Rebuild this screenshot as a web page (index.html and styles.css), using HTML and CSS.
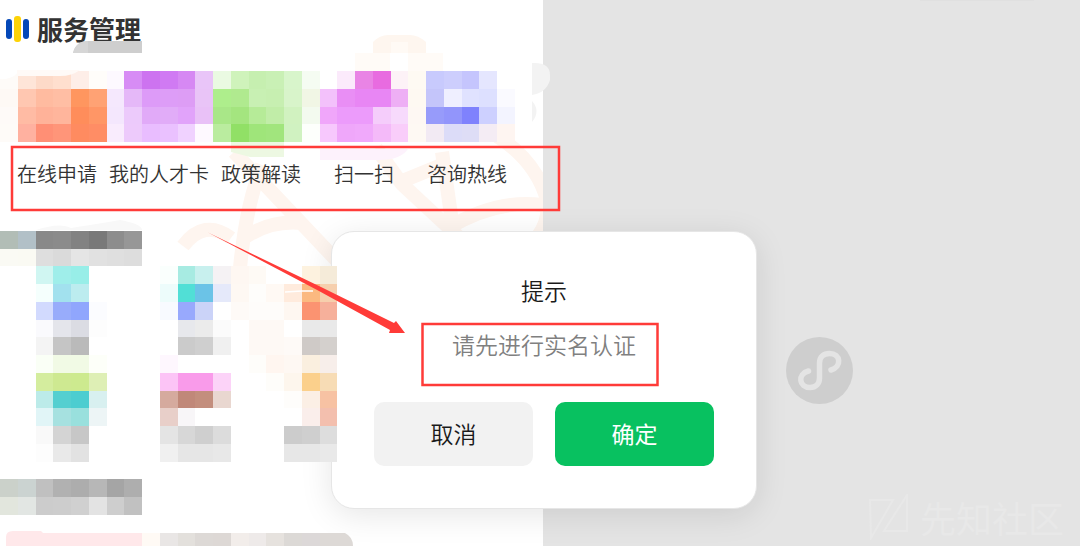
FILE: index.html
```html
<!DOCTYPE html>
<html lang="zh-CN">
<head>
<meta charset="utf-8">
<title>服务管理</title>
<link rel="stylesheet" href="styles.css">
</head>
<body>
<div class="screen">
  <main class="panel">
    <svg class="panel-pattern" viewBox="0 0 543 546" aria-hidden="true">
      <g fill="none" stroke="#fef5ef" stroke-width="14">
        <path d="M183 246Q204 218 231 238"/>
        <path d="M262 165Q246 205 240 268"/>
        <path d="M234 152L338 262"/>
        <path d="M244 238Q270 220 302 223"/>
        <path d="M376 148L402 184L462 240"/>
        <path d="M400 182L444 164"/>
        <path d="M442 152L452 222"/>
        <path d="M448 228Q500 197 548 206"/>
        <path d="M494 134Q536 160 547 200Q550 220 538 236"/>
      </g>
    </svg>
    <header class="title-bar">
      <svg class="title-mark" viewBox="0 0 23 26" aria-hidden="true">
        <rect x="0" y="3" width="6" height="20" rx="3" fill="#0448b8"/>
        <rect x="8" y="0" width="7" height="26" rx="3" fill="#fdd307"/>
        <rect x="17" y="3" width="6" height="20" rx="3" fill="#0448b8"/>
      </svg>
      <h1 class="title">服务管理</h1>
    </header>
    <nav class="services">
      <a class="service" href="#">在线申请</a>
      <a class="service" href="#">我的人才卡</a>
      <a class="service" href="#">政策解读</a>
      <a class="service service-wide" href="#">扫一扫</a>
      <a class="service" href="#">咨询热线</a>
    </nav>
  </main>
  <aside class="side">
    <svg class="mini-logo" viewBox="0 0 67 67" aria-hidden="true">
      <circle cx="33.5" cy="33.5" r="33.5" fill="#cecece"/>
      <path d="M22.500 34C11 37 13 50.500 24 50.500C30 50.500 33.500 46.500 33.500 41V26C33.500 20 37.500 16.500 43.500 16.500C55 16.500 56 30 45 33" fill="none" stroke="#e4e4e4" stroke-width="5.500" stroke-linecap="round"/>
    </svg>
    <div class="brand">
      <svg class="brand-logo" viewBox="0 0 40 46" aria-hidden="true">
        <path d="M1 6H24L2 44ZM38 1V37H15Z" fill="none" stroke="#e8e8e8" stroke-width="2"/>
      </svg>
      <span class="brand-name">先知社区</span>
    </div>
  </aside>
  <section class="dialog" role="dialog" aria-labelledby="dialog-title">
    <h2 class="dialog-title" id="dialog-title">提示</h2>
    <p class="dialog-text">请先进行实名认证</p>
    <div class="dialog-actions">
      <button class="button" type="button">取消</button>
      <button class="button button-primary" type="button">确定</button>
    </div>
  </section>
  <svg class="overlay" width="1080" height="546" viewBox="0 0 1080 546" aria-hidden="true">
    <path d="M73 53Q76 41 88 41H142V53Z" fill="#cecece"/>
    <path d="M88 41V53H73Q76 41 88 41Z" fill="#d6d6d6"/>
    <path d="M373 53V42Q380 35 388 35H410Q418 35 426 42V53Z" fill="#fef6ef"/>
    <path d="M391 42H408V53H391Z" fill="#fffaf5"/>
    <path d="M355 53H390V71H355ZM408 53H443V71H408Z" fill="#fffbf7"/>
    <path d="M532 63Q550 62 550 75V80Q546 93 532 95Z" fill="#f3f3f3"/>
    <path d="M532 101Q541 111 532 122Z" fill="#f3f3f3"/>
    <path d="M0 79Q10 80 18 73V142H0Z" fill="#fefbf8"/>
    <path d="M231 142H284V157H250L231 152Z" fill="#edf8e2"/>
    <path d="M320 149H408Q400 160 380 160H320Z" fill="#fdf2fc"/>
    <path d="M36 230Q60 222 71 228Q110 222 120 220Q142 224 142 230Z" fill="#f8f8f8"/>
    <g id="mosaic" shape-rendering="crispEdges"></g>
    <path d="M17 70H80Q72 76 60 76H17Z" fill="#fffaf7"/>
    <path d="M6 546V537Q6 531 13 531H41L43 533H142V546Z" fill="#ffe8ea"/>
    <path d="M337 533H345Q353 537 353 546H337Z" fill="#ddd9d6"/>
    <path d="M285 292L302 291H313" fill="none" stroke="#fff" stroke-width="1.500"/>
    <path d="M920 0H1034" stroke="#dcdcdc"/>
    <g fill="none" stroke="#ff3b38" stroke-width="2.500">
      <rect x="12" y="147" width="547" height="63"/>
      <rect x="422.500" y="324" width="235" height="61"/>
    </g>
    <path d="M208 232.500L321 287L394 323L396 321L405 333H389L390 330L319 291Z" fill="#ff3b38"/>
  </svg>
</div>
<script src="mosaic.js"></script>
</body>
</html>
```
FILE: styles.css
```css
* {
  box-sizing: border-box;
}

body {
  margin: 0;
  color: #333;
  background: #e4e4e4;
  font-family: "Noto Sans CJK SC", sans-serif;
  font-weight: 350;
}

.screen {
  position: relative;
  display: grid;
  grid-template-columns: 543fr 537fr;
  min-height: 100vh;
  overflow: hidden;
}

.panel {
  position: relative;
  background: #fff;
}

.panel-pattern {
  position: absolute;
  top: 0;
  left: 0;
  width: 100%;
}

.title-bar {
  position: relative;
  display: flex;
  align-items: center;
  gap: 8px;
  padding: 9px 6px;
}

.title-mark {
  width: 23px;
  height: 26px;
}

.title {
  margin: 0;
  font-size: 26px;
  line-height: 40px;
  font-weight: 700;
}

.services {
  position: relative;
  display: flex;
  gap: 12px;
  margin: 88px 0 0;
  padding: 12px 17px;
}

.service {
  color: #333;
  font-size: 20px;
  line-height: 32px;
  text-align: center;
  text-decoration: none;
  white-space: nowrap;
}

.service-wide {
  width: 102px;
}

.side {
  display: flex;
  flex-direction: column;
  align-items: center;
  padding: 337px 16px 6px 32px;
}

.mini-logo {
  width: 67px;
  height: 67px;
}

.brand {
  display: flex;
  align-items: center;
  align-self: flex-end;
  gap: 11px;
  margin-top: auto;
}

.brand-logo {
  width: 40px;
  height: 46px;
}

.brand-name {
  color: #e8e8e8;
  font-size: 36px;
  line-height: 44px;
  font-weight: 400;
}

.dialog {
  position: absolute;
  top: 231px;
  left: 331px;
  width: 426px;
  padding: 42px;
  border: 1px solid #e6e6e6;
  border-radius: 23px;
  background: #fff;
  box-shadow: 0 6px 32px rgba(0, 0, 0, 0.1);
  text-align: center;
}

.dialog-title {
  margin: 0;
  color: #1a1a1a;
  font-size: 23px;
  line-height: 32px;
  font-weight: 350;
}

.dialog-text {
  margin: 22px 0 42px;
  color: #808080;
  font-size: 23px;
  line-height: 32px;
}

.dialog-actions {
  display: grid;
  grid-template-columns: 1fr 1fr;
  gap: 22px;
}

.button {
  height: 64px;
  padding: 0 0 2px;
  border: 0;
  border-radius: 10px;
  color: #1a1a1a;
  background: #f2f2f2;
  font: inherit;
  font-size: 23px;
  line-height: 32px;
}

.button-primary {
  color: #fff;
  background: #08c160;
  font-weight: 400;
}

.overlay {
  position: absolute;
  top: 0;
  left: 0;
  pointer-events: none;
}
```
FILE: mosaic.js
```js
// Each run is [row, first column, colours of consecutive cells].
const runs = [
  [4, 1, "fee5d8 fddac8 ffdfce feeee8 fffdfa fdf9ff d78cf5 cd73f0 d07af3 d688f3 e9c5f8 eafae2 cff3bb c6efb0 c9f0b5 d8f5cb f5fcf2 ffffff fbeafb e984e5 e86be0 fdf2f7 fefaf3 c8cafd cdcefd c5c5fd e5e6fe"],
  [5, 0, "fef9f5 ffc7b1 ffbba0 ffbea4 ff965f ffa274 f5e8fd e5b8f8 dd9bf8 dd9df7 dd9df5 e9c4f7 aeee8c b0ea8f c8f0b3 c7efb1 d8f4ca f1f6e5 f3c1fb e98ef5 e886f4 e886f4 eeaff5 fef9f2 c4c5fa efefff e0e2ff dde0ff fafaff"],
  [6, 0, "fefaf8 ffbba4 ffb299 ffb59c ff8d5b ff9666 f4e7fd eccafb e1aaf8 e1acf8 e1a3fa e9c1f7 a9e788 a4e57f b6eb98 c1eda8 d1f2c0 f3faef f0a6fa ec9bfb ec9bfb f5cdfb f7dafc fef8f3 979bfa 9295fb 7f82fd cdd0ff f3f4ff"],
  [7, 0, "fefbf8 ffb1a0 ff8f75 ff9579 ff8b60 ff8d65 f9ecfd edcafb e9bdff eac1ff f0d2ff fef9ff baec9f 91e066 9fe57a a1e57d d0f2c1 fdfffc f7c8fd efa7fa f0a9fb f4baf9 f9cdfa fef9f3 f2eaf3 dcdcf8 deddf6 f4ecf4 fef5f1"],
  [13, 0, "b2bdb6 b2c0c7 898989 8b8b8b 828282 797979 8d8d8d 979797"],
  [14, 0, "fafaf4 fafaf3 dedede dadada e5e5e5 e1e1e1 dfdfdf dddddd"],
  [15, 2, "d0f6f2 9feeea 98eee8"],
  [15, 9, "fafffd a7ebe2 c8f0ee f5f2f4 fef7f2 fefaf5"],
  [15, 17, "fdf2df f5ebd9"],
  [16, 2, "f5fffd a2e1ee bcecef"],
  [16, 9, "edfcfb 51dfd6 6bc3e7 e5e9fa fef8f3 fefdfb fff9f4 ffebdd fbb980 f6cfad"],
  [17, 2, "d2dafe 98acfb 90a6fd fbfcff"],
  [17, 9, "f8faff 98a9fd cbd3f8 ffffff fefaf7 fefcfa fefcfa fef7f1 fb9371 f6b09b"],
  [18, 2, "fafafd e4e5eb dbdce3 fdfdfd"],
  [18, 10, "e7e8ec ebebeb fbfbfb ffffff fef9f5 fef9f5 ffffff e9e9e9 e9e9e9"],
  [19, 2, "f4f4f4 c5c5c5 bababa"],
  [19, 10, "cbcbcb cfcfcf f0f0f0 ffffff fef9f5 fef9f5 fefaf7 cfcac7 d4d0cd"],
  [20, 2, "fafff6 f1fae5 f1fae5 fdfff9"],
  [20, 9, "fef7fe"],
  [20, 14, "fefdfa fff6f0 fef8f3 faefdf f7eeea"],
  [21, 2, "d4ed9e cee991 cdea8f deefb5"],
  [21, 9, "fcc4f6 f99bea f99bea fcd3f8"],
  [21, 15, "fefdfa fdf6ed fbd08c f7dcb5"],
  [22, 2, "bcebe9 54cfd0 4ccdd0 d8f0f0"],
  [22, 9, "d5aa9e c08879 c38e7d e9d7d0"],
  [22, 16, "fefdfb fbefe5 f7c2a3"],
  [23, 2, "e1f5f7 a6e1e0 99e0dd edf5f6"],
  [23, 9, "e8cfc9 f8f6f8"],
  [23, 17, "faeeeb f3bfae"],
  [24, 2, "f9f9f9 d4d4d4 c7c7c7"],
  [24, 9, "e4e4e4 d7d7d7 cfcfcf dcdcdc"],
  [24, 16, "cccccc cfcfcf dddddd"],
  [25, 2, "fdfdfd e9e9e9 e2e2e2"],
  [25, 9, "f0f0f0 e6e6e6 e6e6e6 e8e8e8"],
  [25, 16, "e7e7e7 e7e7e7 e9e9e9"],
  [27, 0, "cbd1ca cbd3d1 c0c0c0 b1b1b1 adadad b7b7b7 a5a5a5 aeaeae"],
  [28, 0, "e2e6dd e2e6e3 cccccc cdcdcd d0d0d0 e3e3e3 cecece c1c1c1"],
  [30, 8, "fffaf5 e9e6e5 e3e0dc ddd9d6 ddd8d5 f2edea eeeae9 e6e2de dcd9d6 dcd8d8 ddd9d6"]
];

const CELL = 17.75;
const mosaic = document.getElementById("mosaic");
const edge = (index) => Math.round(index * CELL);

for (const [row, start, colours] of runs) {
  colours.split(" ").forEach((colour, i) => {
    const rect = document.createElementNS("http://www.w3.org/2000/svg", "rect");
    const x = edge(start + i);
    const y = edge(row);
    rect.setAttribute("x", x);
    rect.setAttribute("y", y);
    rect.setAttribute("width", edge(start + i + 1) - x);
    rect.setAttribute("height", edge(row + 1) - y);
    rect.setAttribute("fill", "#" + colour);
    mosaic.append(rect);
  });
}
```
